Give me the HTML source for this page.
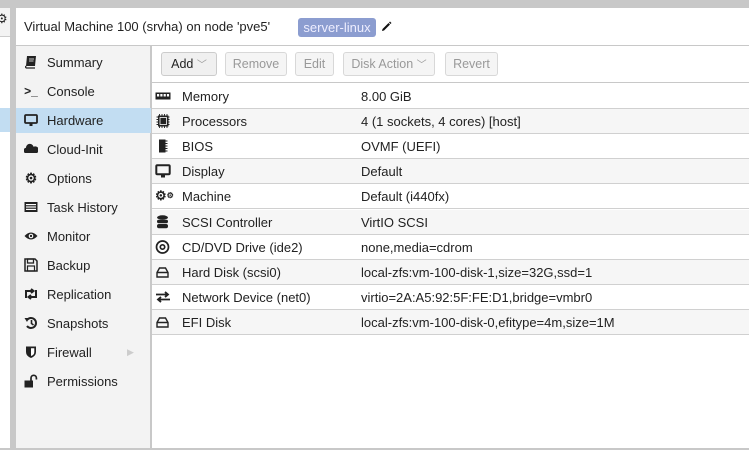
<!DOCTYPE html>
<html><head><style>
*{box-sizing:border-box;margin:0;padding:0}
body{width:749px;height:450px;overflow:hidden;background:#c8c8c8;font-family:"Liberation Sans",sans-serif;font-size:13px;color:#222;position:relative}
.abs{position:absolute}
.side{left:16px;top:46px;width:135px;height:402px;background:#f3f3f3;border-right:1px solid #c8c8c8}
.si{position:absolute;left:0;width:135px;height:25px;line-height:25px;padding-left:31px;font-size:13px}
.si .ic{position:absolute;left:8px;top:5px;width:14px;height:14px;font-size:14px;line-height:14px;text-align:center}
.main{left:152px;top:46px;width:597px;height:402px;background:#fff}
.btn{position:absolute;top:6px;height:24px;border:1px solid #d8d8d8;border-radius:3px;background:#f5f5f5;color:#999;line-height:22px;text-align:center;font-size:12.5px}
.row{position:absolute;left:0;width:597px;height:25.2px;border-bottom:1px solid #d0d0d0;line-height:25px}
.row .n{position:absolute;left:30px}
.row .v{position:absolute;left:209px}
.row .ic{position:absolute;left:3px;top:5px;width:16px;height:14px}
</style></head><body>
<div class="abs" style="left:0;top:8px;width:10px;height:440px;background:#fff"></div>
<div class="abs" style="left:0;top:8px;width:10px;height:29px;background:#f3f3f3;border-bottom:1px solid #ccc;font-size:13px;line-height:22px;overflow:hidden"><span style="margin-left:-4px">⚙</span></div>
<div class="abs" style="left:0;top:108px;width:10px;height:24px;background:#c2ddf2"></div>
<div class="abs" style="left:16px;top:8px;width:733px;height:38px;background:#fff;border-bottom:1px solid #c8c8c8"></div>
<div class="abs" style="left:24px;top:19px;font-size:13px">Virtual Machine 100 (srvha) on node 'pve5'</div>
<div class="abs" style="left:298px;top:18px;width:78px;height:19px;background:#8c9dd0;color:#eef;border-radius:3px;line-height:19px;text-align:center;font-size:13px">server-linux</div>
<svg class="abs" style="left:380px;top:21px" width="12" height="12" viewBox="0 0 12 12"><path d="M2 10 L2.5 8 L8.5 2 L10 3.5 L4 9.5 Z M9 1.5 L10 0.5 L11.5 2 L10.5 3 Z" fill="#111"/></svg>

<div class="abs side">
<div class="si" style="top:4px"><svg class="ic" viewBox="0 0 14 14"><path d="M3 1 H12 L11 11 H2 Z" fill="#222"/><path d="M2 11 Q1 12.5 2.5 13 H11" fill="none" stroke="#222" stroke-width="1.3"/><path d="M5 4H10M5 6H9.5" stroke="#fff" stroke-width="0.8"/></svg>Summary</div>
<div class="si" style="top:33px"><span class="ic" style="font-size:12px;font-weight:bold">&gt;_</span>Console</div>
<div class="si" style="top:62px;background:#c2ddf2"><svg class="ic" viewBox="0 0 14 14"><rect x="1" y="2" width="12" height="8" rx="1" fill="none" stroke="#222" stroke-width="1.8"/><rect x="5.5" y="10" width="3" height="3" fill="#222"/></svg>Hardware</div>
<div class="si" style="top:91px"><svg class="ic" viewBox="0 0 14 14"><path d="M1 11 A2.8 2.8 0 0 1 2 5.8 A3.8 3.8 0 0 1 9.5 4.8 A3 3 0 0 1 13 11 Z" fill="#222"/></svg>Cloud-Init</div>
<div class="si" style="top:120px"><span class="ic" style="font-weight:bold">⚙</span>Options</div>
<div class="si" style="top:149px"><svg class="ic" viewBox="0 0 14 14"><rect x="0.5" y="2" width="13" height="10" fill="#222"/><rect x="2" y="4" width="10" height="1.2" fill="#fff"/><rect x="2" y="6.4" width="10" height="1.2" fill="#fff"/><rect x="2" y="8.8" width="10" height="1.2" fill="#fff"/></svg>Task History</div>
<div class="si" style="top:178px"><svg class="ic" viewBox="0 0 14 14"><path d="M0.5 7 Q7 0 13.5 7 Q7 14 0.5 7Z" fill="#222"/><circle cx="7" cy="7" r="2.3" fill="#fff"/><circle cx="7" cy="7" r="1.2" fill="#222"/></svg>Monitor</div>
<div class="si" style="top:207px"><svg class="ic" viewBox="0 0 14 14"><path d="M1 1 H11 L13 3 V13 H1 Z" fill="none" stroke="#222" stroke-width="1.5"/><rect x="3.5" y="1" width="6" height="4" fill="none" stroke="#222" stroke-width="1.3"/><rect x="3.5" y="8" width="7" height="5" fill="none" stroke="#222" stroke-width="1.2"/></svg>Backup</div>
<div class="si" style="top:236px"><svg class="ic" viewBox="0 0 14 14"><path d="M2 11 V4 H9 M7 2 L9.5 4 L7 6 M12 3 V10 H5 M7 8 L4.5 10 L7 12" fill="none" stroke="#222" stroke-width="2"/></svg>Replication</div>
<div class="si" style="top:265px"><svg class="ic" viewBox="0 0 14 14"><path d="M3 4 A5 5 0 1 1 3 10" fill="none" stroke="#222" stroke-width="2"/><path d="M0.5 2 L5 2 L3 6Z" fill="#222"/><path d="M7.5 4 V7.5 L9.5 9" fill="none" stroke="#222" stroke-width="1.6"/></svg>Snapshots</div>
<div class="si" style="top:294px"><svg class="ic" viewBox="0 0 14 14"><path d="M2 1.5 H12 V7 Q12 11 7 13 Q2 11 2 7 Z" fill="#222"/><path d="M7 3.3 H10.3 V7 Q10.3 10 7 11Z" fill="#fff"/></svg>Firewall<span style="position:absolute;left:111px;color:#ccc;font-size:9px">▶</span></div>
<div class="si" style="top:323px"><svg class="ic" viewBox="0 0 14 14"><rect x="0.5" y="6.5" width="8.5" height="7" fill="#222"/><path d="M7 6.5 V4 A2.7 2.7 0 0 1 12.4 4 V5.5" fill="none" stroke="#222" stroke-width="1.7"/></svg>Permissions</div>
</div>

<div class="abs main">
<div style="position:absolute;left:0;top:0;width:597px;height:37px;border-bottom:1px solid #c8c8c8"></div>
<div class="btn" style="left:9px;width:56px;color:#222;background:#f0f0f0;border-color:#ccc">Add <span style="color:#999;font-size:10px">﹀</span></div>
<div class="btn" style="left:73px;width:62px">Remove</div>
<div class="btn" style="left:143px;width:39px">Edit</div>
<div class="btn" style="left:191px;width:92px">Disk Action <span style="font-size:10px">﹀</span></div>
<div class="btn" style="left:293px;width:53px">Revert</div>
<div style="position:absolute;left:0;top:37.5px">
<div class="row" style="top:0"><svg class="ic" viewBox="0 0 16 14"><rect x="0.5" y="3.5" width="15" height="7" fill="#222"/><rect x="2" y="5" width="2.2" height="2.5" fill="#fff"/><rect x="5.3" y="5" width="2.2" height="2.5" fill="#fff"/><rect x="8.6" y="5" width="2.2" height="2.5" fill="#fff"/><rect x="11.9" y="5" width="2.2" height="2.5" fill="#fff"/></svg><span class="n">Memory</span><span class="v">8.00 GiB</span></div>
<div class="row" style="top:25.2px;background:#f6f6f6"><svg class="ic" viewBox="0 0 16 14"><path d="M1.5 3H14.5M1.5 5.5H14.5M1.5 8H14.5M1.5 10.5H14.5M4.5 0V14M7 0V14M9.5 0V14M12 0V14" stroke="#222" stroke-width="0.9"/><rect x="3" y="1.5" width="10.5" height="11" fill="#222"/><rect x="5" y="3.5" width="6.5" height="7" fill="none" stroke="#fff" stroke-width="0.8"/></svg><span class="n">Processors</span><span class="v">4 (1 sockets, 4 cores) [host]</span></div>
<div class="row" style="top:50.4px"><svg class="ic" viewBox="0 0 16 14"><rect x="4" y="0.5" width="6.5" height="13" fill="#222"/><path d="M10.5 2H12.5M10.5 4.5H12.5M10.5 7H12.5M10.5 9.5H12.5M10.5 12H12.5" stroke="#222"/></svg><span class="n">BIOS</span><span class="v">OVMF (UEFI)</span></div>
<div class="row" style="top:75.6px;background:#f6f6f6"><svg class="ic" viewBox="0 0 16 14"><rect x="1.3" y="1.3" width="13.4" height="9" rx="1" fill="none" stroke="#222" stroke-width="2"/><rect x="6" y="10" width="4" height="3.5" fill="#222"/></svg><span class="n">Display</span><span class="v">Default</span></div>
<div class="row" style="top:100.8px"><span class="ic" style="font-size:13px;line-height:14px;font-weight:bold">⚙<span style="font-size:8px;vertical-align:top">⚙</span></span><span class="n">Machine</span><span class="v">Default (i440fx)</span></div>
<div class="row" style="top:126px;background:#f6f6f6"><svg class="ic" viewBox="0 0 16 14"><ellipse cx="7.5" cy="2.5" rx="5.5" ry="2.2" fill="#222"/><rect x="2" y="4.8" width="11" height="3.4" rx="1.7" fill="#222"/><rect x="2" y="9" width="11" height="4.3" rx="2" fill="#222"/></svg><span class="n">SCSI Controller</span><span class="v">VirtIO SCSI</span></div>
<div class="row" style="top:151.2px"><svg class="ic" viewBox="0 0 16 14"><circle cx="7.5" cy="7" r="6" fill="none" stroke="#222" stroke-width="1.7"/><circle cx="7.5" cy="7" r="2.2" fill="none" stroke="#222" stroke-width="1.7"/></svg><span class="n">CD/DVD Drive (ide2)</span><span class="v">none,media=cdrom</span></div>
<div class="row" style="top:176.4px;background:#f6f6f6"><svg class="ic" viewBox="0 0 16 14"><path d="M2 7.5 L4.5 3 H10.5 L13 7.5 V12 H2 Z M2 7.5 H13" fill="none" stroke="#222" stroke-width="1.4"/></svg><span class="n">Hard Disk (scsi0)</span><span class="v">local-zfs:vm-100-disk-1,size=32G,ssd=1</span></div>
<div class="row" style="top:201.6px"><svg class="ic" viewBox="0 0 16 14"><path d="M1 4.5H13M10 2L13 4.5L10 7M15 9.5H3M6 7L3 9.5L6 12" fill="none" stroke="#222" stroke-width="1.8"/></svg><span class="n">Network Device (net0)</span><span class="v">virtio=2A:A5:92:5F:FE:D1,bridge=vmbr0</span></div>
<div class="row" style="top:226.8px;background:#f6f6f6"><svg class="ic" viewBox="0 0 16 14"><path d="M2 7.5 L4.5 3 H10.5 L13 7.5 V12 H2 Z M2 7.5 H13" fill="none" stroke="#222" stroke-width="1.4"/></svg><span class="n">EFI Disk</span><span class="v">local-zfs:vm-100-disk-0,efitype=4m,size=1M</span></div>
</div>
</div>
</body></html>
